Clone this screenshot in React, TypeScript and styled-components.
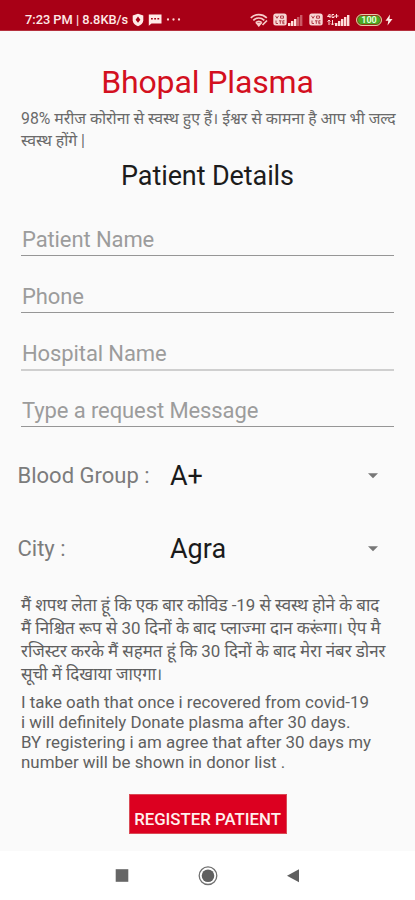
import React from "react";
import styled, { createGlobalStyle } from "styled-components";

const GlobalStyle = createGlobalStyle`
  * { box-sizing: border-box; }
  body { margin: 0; background: #fafafa; }
`;

const Screen = styled.div`
  width: 415px;
  height: 900px;
  display: flex;
  flex-direction: column;
  overflow: hidden;
  background: #fafafa;
  font-family: Roboto, "Noto Sans Devanagari", "Noto Sans", sans-serif;
`;

const StatusBar = styled.header`
  height: 31px;
  flex: none;
  display: flex;
  justify-content: space-between;
  padding: 9px 22px 0 25px;
  background: #a80016;
  border-bottom: 1px solid #b5303d;
  color: #ffe9e6;
`;

const StatusGroup = styled.div<{ $gap: number }>`
  display: flex;
  align-items: center;
  height: 21px;
  gap: ${(p) => p.$gap}px;
  svg { display: block; flex: none; }
`;

const Cell = styled.span`
  display: flex;
  align-items: center;
`;

const Clock = styled.span`
  font-size: 12.8px;
  font-weight: 500;
  line-height: 21px;
  white-space: pre;
`;

const Content = styled.main`
  flex: 1;
  display: flex;
  flex-direction: column;
`;

const Title = styled.h1`
  margin: 31px 0 0;
  font-size: 32px;
  font-weight: 400;
  line-height: 40px;
  letter-spacing: -0.12px;
  text-align: center;
  color: #d3101f;
`;

const Intro = styled.p`
  margin: 6px 21px 0;
  font-size: 15.8px;
  line-height: 21.5px;
  color: #6a6a6a;
`;

const Subtitle = styled.h2`
  margin: 9px 0 7px;
  font-size: 27px;
  font-weight: 400;
  line-height: 32px;
  letter-spacing: -0.1px;
  text-align: center;
  color: #1c1c1c;
`;

const Line = styled.span`
  display: block;
  white-space: nowrap;
`;

const Field = styled.input<{ $soft?: boolean; $short?: boolean }>`
  display: block;
  height: ${(p) => (p.$soft ? 58 : p.$short ? 56 : 57)}px;
  margin: 0 21px;
  padding: ${(p) => (p.$short ? 23 : 24)}px 1px 0;
  border: 0;
  border-bottom: ${(p) => (p.$soft ? "2px solid #cfcfcf" : "1px solid #969696")};
  border-radius: 0;
  outline: 0;
  background: transparent;
  font: 400 22px/26px Roboto, sans-serif;
  letter-spacing: -0.1px;
  color: #222;
  &::placeholder { color: #9c9c9c; opacity: 1; }
`;

const Selects = styled.section`
  margin-top: 12px;
`;

const SelectRow = styled.div`
  height: 73px;
  display: grid;
  grid-template-columns: 152.5px 1fr 12px;
  align-items: center;
  padding: 0 36px 0 17.5px;
  svg { display: block; }
`;

const SelectLabel = styled.span`
  font-size: 22px;
  line-height: 30px;
  color: #7c7c7c;
`;

const SelectValue = styled.span`
  font-size: 27px;
  line-height: 30px;
  color: #1a1a1a;
`;

const Oath = styled.p<{ $pitch: number; $top: number }>`
  margin: ${(p) => p.$top}px 21px 0;
  font-size: 16.9px;
  line-height: ${(p) => p.$pitch}px;
  color: #606060;
`;

const Register = styled.button`
  align-self: center;
  width: 158px;
  height: 40px;
  margin-top: 22px;
  padding: 10px 0 0;
  border: 1px solid #d94a55;
  background: #dc0020;
  color: #fff0ee;
  font: 500 16.8px/26px Roboto, sans-serif;
  white-space: nowrap;
`;

const NavBar = styled.nav`
  height: 49px;
  flex: none;
  display: flex;
  align-items: center;
  justify-content: space-between;
  padding: 0 115px;
  background: #fff;
`;

const Shield = () => (
  <svg width="12" height="14" viewBox="0 0 12 14">
    <path d="M6 .8 11.300 2.500v4.700c0 3-2.500 5-5.300 6.100C3.200 12.200.7 10.200.7 7.200V2.500Z" fill="#ffe9e6" />
    <path d="M6 3.600 8.400 6.800 6 9.800 3.600 6.800Z" fill="#a80016" />
  </svg>
);

const Chat = () => (
  <svg width="14" height="12" viewBox="0 0 14 12">
    <path d="M1 .5h12.500v9H3.500L.8 11.800V.5Z" fill="#ffe9e6" />
    <path d="M3 4.800h1.800M6.200 4.800h1.800M9.400 4.800h1.800" stroke="#a80016" strokeWidth="1.400" />
  </svg>
);

const Dots = () => (
  <svg width="15" height="4" viewBox="0 0 15 4">
    <circle cx="2" cy="1.500" r="1.150" fill="#ffd5d2" />
    <circle cx="7.500" cy="1.500" r="1.150" fill="#ffd5d2" />
    <circle cx="13" cy="1.500" r="1.150" fill="#ffd5d2" />
  </svg>
);

const Wifi = () => (
  <svg width="18" height="14" viewBox="0 0 18 14" fill="none" stroke="#f8ccca" strokeWidth="1.700">
    <path d="M.8 4.800c4.700-4.300 11.300-4.300 16 0M3.300 7.300c3.300-3 7.700-3 11 0M5.800 9.700c1.800-1.700 4.200-1.700 6 0" />
    <path d="m7 10.500 1.800 2.200 1.800-2.200Z" fill="#f8ccca" />
    <path d="m12.500 12 4.500-4.500" />
  </svg>
);

const VoLte = () => (
  <svg width="14" height="13" viewBox="0 0 14 13">
    <rect x=".3" y=".5" width="13.400" height="12" rx="2.500" fill="#f8d6d4" />
    <path d="m2.500 2.800 1.500 2.500 1.500-2.500M7.500 3h3v2.200h-3ZM3 7.500v3h2M6 7.800h2.600M7.300 7.800v3M11.500 7.700H9.800v3h1.700M9.800 9.200h1.500" fill="none" stroke="#b33c49" strokeWidth="1" />
  </svg>
);

const Signal = ({ full }: { full?: boolean }) => (
  <svg width={full ? 23 : 15} height="14" viewBox={full ? "-8 0 23 14" : "0 0 15 14"}>
    {[0, 1, 2, 3, 4].map((i) => (
      <rect
        key={i}
        x={i * 3}
        y={10 - i * 2}
        width="2.400"
        height={3 + i * 2}
        fill="#ffdedb"
        opacity={full || i < 3 ? 1 : 0.4}
      />
    ))}
    {full && (
      <path
        d="M-5.500 1-7.500 3.500h3M-5 1v4M-1 1.500h-2v3h2V3M1.500 1v4M-.5 3h4M-6 7v5M-7.500 8.500-6 7l1.500 1.500M-2.500 7v5M-4 10.500l1.500 1.500L-1 10.500"
        fill="none"
        stroke="#ffdedb"
        strokeWidth="1"
      />
    )}
  </svg>
);

const BatteryShell = styled.span`
  width: 26px;
  height: 12px;
  display: flex;
  align-items: center;
  justify-content: center;
  border: 1px solid #e8c8a8;
  border-radius: 6px;
  background: #48a822;
  box-shadow: inset 0 0 0 1px #8d3a15;
  color: #e5ffd8;
  font-size: 9px;
  font-weight: 700;
  line-height: 10px;
`;

const RightIcons = styled(StatusGroup)`
  ${Cell}:nth-child(2) { margin-right: -1px; margin-left: 3px; }
  ${Cell}:nth-child(4) { margin-left: 4px; }
  ${Cell}:nth-child(5) { margin-left: 2px; }
  ${Cell}:nth-child(6) { margin-left: 4px; }
  ${Cell}:nth-child(7) { margin-left: 1px; }
`;

const Bolt = () => (
  <svg width="8" height="12" viewBox="0 0 8 12">
    <path d="M5 .5.500 6.700h2.800L2.500 11.500 7.500 5H4.500Z" fill="#ffe9e6" />
  </svg>
);

const Caret = () => (
  <svg width="12" height="6" viewBox="0 0 12 6">
    <path d="M1 .2h10L6 5.200Z" fill="#777" />
  </svg>
);

const selects = [
  { label: "Blood Group :", value: "A+" },
  { label: "City :", value: "Agra" },
];

export default function App() {
  return (
    <Screen>
      <GlobalStyle />
      <StatusBar>
        <StatusGroup $gap={4}>
          <Clock>7:23 PM | 8.8KB/s</Clock>
          <Shield />
          <Chat />
          <Dots />
        </StatusGroup>
        <RightIcons $gap={2}>
          <Cell><Wifi /></Cell>
          <Cell><VoLte /></Cell>
          <Cell><Signal /></Cell>
          <Cell><VoLte /></Cell>
          <Cell><Signal full /></Cell>
          <Cell><BatteryShell>100</BatteryShell></Cell>
          <Cell><Bolt /></Cell>
        </RightIcons>
      </StatusBar>
      <Content>
        <Title>Bhopal Plasma</Title>
        <Intro>
          <Line>98% मरीज कोरोना से स्वस्थ हुए हैं। ईश्वर से कामना है आप भी जल्द</Line>
          <Line>स्वस्थ होंगे |</Line>
        </Intro>
        <Subtitle>Patient Details</Subtitle>
        <Field placeholder="Patient Name" />
        <Field placeholder="Phone" />
        <Field placeholder="Hospital Name" $soft />
        <Field placeholder="Type a request Message" $short />
        <Selects>
          {selects.map((s) => (
            <SelectRow key={s.label}>
              <SelectLabel>{s.label}</SelectLabel>
              <SelectValue>{s.value}</SelectValue>
              <Caret />
            </SelectRow>
          ))}
        </Selects>
        <Oath $pitch={23} $top={9}>
          <Line>मैं शपथ लेता हूं कि एक बार कोविड -19 से स्वस्थ होने के बाद</Line>
          <Line>मैं निश्चित रूप से 30 दिनों के बाद प्लाज्मा दान करूंगा। ऐप मै</Line>
          <Line>रजिस्टर करके मैं सहमत हूं कि 30 दिनों के बाद मेरा नंबर डोनर</Line>
          <Line>सूची में दिखाया जाएगा।</Line>
        </Oath>
        <Oath $pitch={20} $top={6}>
          <Line>I take oath that once i recovered from covid-19</Line>
          <Line>i will definitely Donate plasma after 30 days.</Line>
          <Line>BY registering i am agree that after 30 days my</Line>
          <Line>number will be shown in donor list .</Line>
        </Oath>
        <Register>REGISTER PATIENT</Register>
      </Content>
      <NavBar>
        <svg width="14" height="14" viewBox="0 0 14 14">
          <rect x=".7" y=".2" width="12.600" height="12.600" fill="#666" />
        </svg>
        <svg width="20" height="20" viewBox="0 0 20 20">
          <circle cx="10" cy="9.700" r="8.800" fill="none" stroke="#707070" strokeWidth="1.300" />
          <circle cx="10" cy="9.700" r="6.300" fill="#606060" />
        </svg>
        <svg width="14" height="14" viewBox="0 0 14 14">
          <path d="M13 .3v13L1 6.800Z" fill="#606060" />
        </svg>
      </NavBar>
    </Screen>
  );
}
